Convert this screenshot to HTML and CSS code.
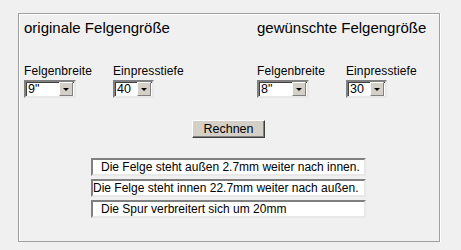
FILE: index.html
```html
<!DOCTYPE html>
<html lang="de">
<head>
    <meta charset="UTF-8">
    <meta name="viewport" content="width=device-width, initial-scale=1.0">
    <title>Felgenrechner</title>
    <link rel="stylesheet" href="styles.css">
</head>
<body>
  <div class="panel">
    <div class="sizes">
      <div class="col">
        <h2>originale Felgengröße</h2>
        <div class="fields">
          <div class="field">
            <label>Felgenbreite</label>
            <div class="select wide"><span class="value">9"</span><span class="arrow"></span></div>
          </div>
          <div class="field">
            <label>Einpresstiefe</label>
            <div class="select narrow"><span class="value">40</span><span class="arrow"></span></div>
          </div>
        </div>
      </div>
      <div class="col right">
        <h2>gewünschte Felgengröße</h2>
        <div class="fields">
          <div class="field">
            <label>Felgenbreite</label>
            <div class="select wide"><span class="value">8"</span><span class="arrow"></span></div>
          </div>
          <div class="field">
            <label>Einpresstiefe</label>
            <div class="select narrow"><span class="value">30</span><span class="arrow"></span></div>
          </div>
        </div>
      </div>
    </div>

    <div class="actions">
      <button type="button">Rechnen</button>
    </div>

    <div class="results">
      <div class="result">Die Felge steht außen 2.7mm weiter nach innen.</div>
      <div class="result tight">Die Felge steht innen 22.7mm weiter nach außen.</div>
      <div class="result">Die Spur verbreitert sich um 20mm</div>
    </div>
  </div>
</body>
</html>
```

FILE: styles.css
```css
body {
  margin: 0;
  background: #f0f0f0;
  font-family: "Liberation Sans", Arial, sans-serif;
  color: #000;
}

.panel {
  box-sizing: border-box;
  width: 422px;
  height: 229px;
  margin: 13px 0 0 18px;
  border: 1px solid #a0a0a0;
  box-shadow: inset 1px 1px 0 #fff, 1px 1px 0 #fff;
  padding: 5px 0 0 5px;
}

.sizes {
  display: flex;
}

.col {
  width: 233px;
  flex-shrink: 0;
}

.col.right {
  width: auto;
  flex: 1;
}

h2 {
  margin: 0;
  font-size: 15px;
  font-weight: normal;
  line-height: 18px;
}

.fields {
  display: flex;
  margin-top: 27px;
}

.field {
  width: 89px;
  display: flex;
  flex-direction: column;
}

label {
  font-size: 12px;
  line-height: 15px;
  letter-spacing: 0.1px;
}

.select {
  box-sizing: border-box;
  height: 18px;
  margin-top: 1px;
  display: flex;
  align-items: center;
  background: #fff;
  border: 2px solid;
  border-color: #808080 #e8e8e8 #e8e8e8 #808080;
  box-shadow: inset 1px 1px 0 #404040;
}

.select.wide {
  width: 52px;
}

.select.narrow {
  width: 41px;
}

.value {
  flex: 1;
  font-size: 12.5px;
  padding-left: 2px;
  line-height: 14px;
}

.arrow {
  box-sizing: border-box;
  width: 14px;
  height: 14px;
  margin-right: 1px;
  background: #d4d0c8;
  border: 1px solid;
  border-color: #fff #808080 #808080 #fff;
  position: relative;
}

.arrow::after {
  content: "";
  position: absolute;
  left: 3px;
  top: 5px;
  border-left: 3px solid transparent;
  border-right: 3px solid transparent;
  border-top: 3px solid #000;
}

.actions {
  display: flex;
  justify-content: center;
  margin-top: 22px;
  padding-right: 6px;
}

button {
  box-sizing: border-box;
  width: 73px;
  height: 18px;
  padding: 0;
  font-family: "Liberation Sans", Arial, sans-serif;
  font-size: 12.5px;
  background: #d4d0c8;
  border: 1px solid;
  border-color: #fff #404040 #404040 #fff;
  box-shadow: inset -1px -1px 0 #808080;
}

.results {
  margin: 20px 0 0 67px;
  display: flex;
  flex-direction: column;
  gap: 3px;
}

.result {
  box-sizing: border-box;
  width: 275px;
  height: 18px;
  background: #fff;
  border: 2px solid;
  border-color: #808080 #e8e8e8 #e8e8e8 #808080;
  font-size: 12px;
  line-height: 14px;
  padding-left: 8px;
  white-space: nowrap;
  overflow: hidden;
}

.result.tight {
  padding-left: 0;
}
```
